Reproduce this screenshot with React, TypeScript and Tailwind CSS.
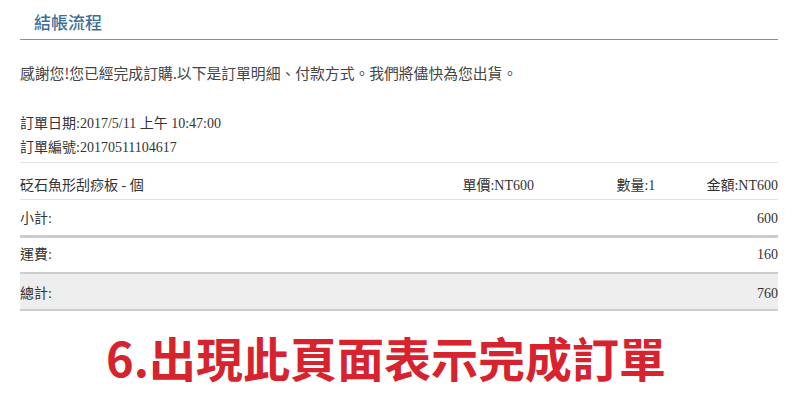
export default function App() {
  const body = { fontFamily: "'Liberation Serif', 'Noto Sans CJK TC', serif" }

  return (
    <div className="w-[800px] h-[405px] bg-white overflow-hidden" style={body}>
      <div className="mx-[20px] w-[758px]">
        {/* Header */}
        <div className="h-[40px] flex items-end pb-[6px] pl-[14px] border-b border-[#7f9298]">
          <h1
            className="text-[17px] leading-[22px] font-medium text-[#3f6f98]"
            style={{ fontFamily: "'Noto Sans CJK TC', sans-serif" }}
          >
            結帳流程
          </h1>
        </div>

        {/* Intro */}
        <p
          className="mt-[23px] text-[14.8px] leading-[20px] text-[#444] whitespace-nowrap"
          style={{ fontFamily: "'Noto Sans CJK TC', sans-serif" }}
        >
          感謝您!您已經完成訂購.以下是訂單明細、付款方式。我們將儘快為您出貨。
        </p>

        {/* Order info */}
        <div className="mt-[29px] pb-[2px] border-b border-[#e2e2e2] text-[14px] leading-[24px] text-[#333]">
          <div>訂單日期:2017/5/11 上午 10:47:00</div>
          <div>訂單編號:20170511104617</div>
        </div>

        {/* Item */}
        <div className="flex items-center pt-[13px] pb-[3px] border-b border-[#e2e2e2] text-[14px] leading-[20px] text-[#333] whitespace-nowrap">
          <span className="flex-1">砭石魚形刮痧板 - 個</span>
          <span className="w-[154px] flex-none">單價:NT600</span>
          <span className="w-[90px] flex-none">數量:1</span>
          <span className="flex-none text-right">金額:NT600</span>
        </div>

        {/* Totals */}
        <div className="flex justify-between pt-[9px] pb-[6px] border-b-[3px] border-[#cdcdcd] text-[14px] leading-[20px] text-[#333]">
          <span>小計:</span>
          <span>600</span>
        </div>
        <div className="flex justify-between pt-[7px] pb-[7px] border-b-[2px] border-[#cdcdcd] text-[14px] leading-[20px] text-[#333]">
          <span>運費:</span>
          <span>160</span>
        </div>
        <div className="flex justify-between pt-[10px] pb-[5px] bg-[#eeeeee] border-b-[2px] border-[#cdcdcd] text-[14px] leading-[20px] text-[#333]">
          <span>總計:</span>
          <span>760</span>
        </div>
      </div>

      {/* Caption */}
      <div
        className="mt-[22px] pl-[106px] text-[47px] leading-[47px] font-bold text-[#d7232d] whitespace-nowrap"
        style={{ fontFamily: "'Noto Sans CJK TC', sans-serif" }}
      >
        6.出現此頁面表示完成訂單
      </div>
    </div>
  )
}
